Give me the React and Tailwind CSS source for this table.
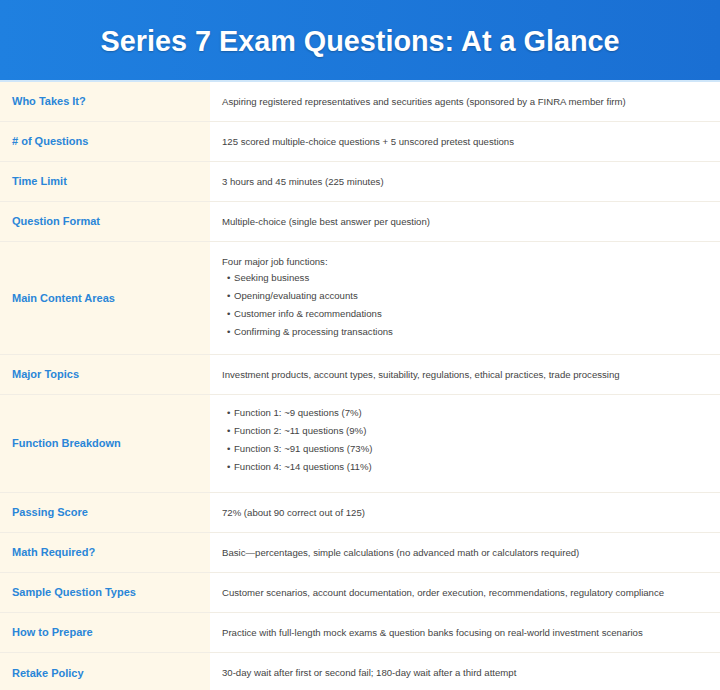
import React from "react";

const rows = [
  { label: "Who Takes It?", value: "Aspiring registered representatives and securities agents (sponsored by a FINRA member firm)" },
  { label: "# of Questions", value: "125 scored multiple-choice questions + 5 unscored pretest questions" },
  { label: "Time Limit", value: "3 hours and 45 minutes (225 minutes)" },
  { label: "Question Format", value: "Multiple-choice (single best answer per question)" },
  {
    label: "Main Content Areas",
    intro: "Four major job functions:",
    list: [
      "Seeking business",
      "Opening/evaluating accounts",
      "Customer info & recommendations",
      "Confirming & processing transactions",
    ],
    h: "h-[113px]",
  },
  { label: "Major Topics", value: "Investment products, account types, suitability, regulations, ethical practices, trade processing" },
  {
    label: "Function Breakdown",
    list: [
      "Function 1: ~9 questions (7%)",
      "Function 2: ~11 questions (9%)",
      "Function 3: ~91 questions (73%)",
      "Function 4: ~14 questions (11%)",
    ],
    h: "h-[98px]",
    pb: true,
  },
  { label: "Passing Score", value: "72% (about 90 correct out of 125)" },
  { label: "Math Required?", value: "Basic\u2014percentages, simple calculations (no advanced math or calculators required)" },
  { label: "Sample Question Types", value: "Customer scenarios, account documentation, order execution, recommendations, regulatory compliance" },
  { label: "How to Prepare", value: "Practice with full-length mock exams & question banks focusing on real-world investment scenarios" },
  { label: "Retake Policy", value: "30-day wait after first or second fail; 180-day wait after a third attempt" },
];

export default function App() {
  return (
    <div className="w-[720px] h-[690px] bg-white overflow-hidden" style={{ fontFamily: '"Liberation Sans", Arial, sans-serif' }}>
      <div className="h-[82px] flex items-center justify-center pt-[3px] bg-gradient-to-r from-[#1f80e0] to-[#1a6fd3] border-b-2 border-[#cfe6f9]">
        <h1 className="text-[28.8px] font-bold text-white [text-shadow:0_1px_2px_rgba(0,0,0,0.25)]">
          Series 7 Exam Questions: At a Glance
        </h1>
      </div>
      <div className="flex flex-col">
        {rows.map((r, i) => (
          <div key={i} className={`flex ${r.h ? r.h : "h-[40px]"} ${i < rows.length - 1 ? "border-b border-[#f1ede4]" : ""}`}>
            <div className="w-[210px] shrink-0 bg-[#fef8e9] flex items-center pl-[12px] text-[11px] font-bold text-[#2a86d8]">
              {r.label}
            </div>
            <div className={`flex-1 flex flex-col justify-center pl-[12px] text-[9.6px] text-[#444444] ${r.pb ? "pb-[8px]" : ""}`}>
              {r.value && <div className="leading-[12px]">{r.value}</div>}
              {r.intro && <div className="leading-[14px]">{r.intro}</div>}
              {r.list && (
                <ul>
                  {r.list.map((t, j) => (
                    <li key={j} className="flex leading-[14px] py-[2px] pl-[5px]">
                      <span className="w-[7px]">•</span>
                      <span>{t}</span>
                    </li>
                  ))}
                </ul>
              )}
            </div>
          </div>
        ))}
      </div>
    </div>
  );
}
